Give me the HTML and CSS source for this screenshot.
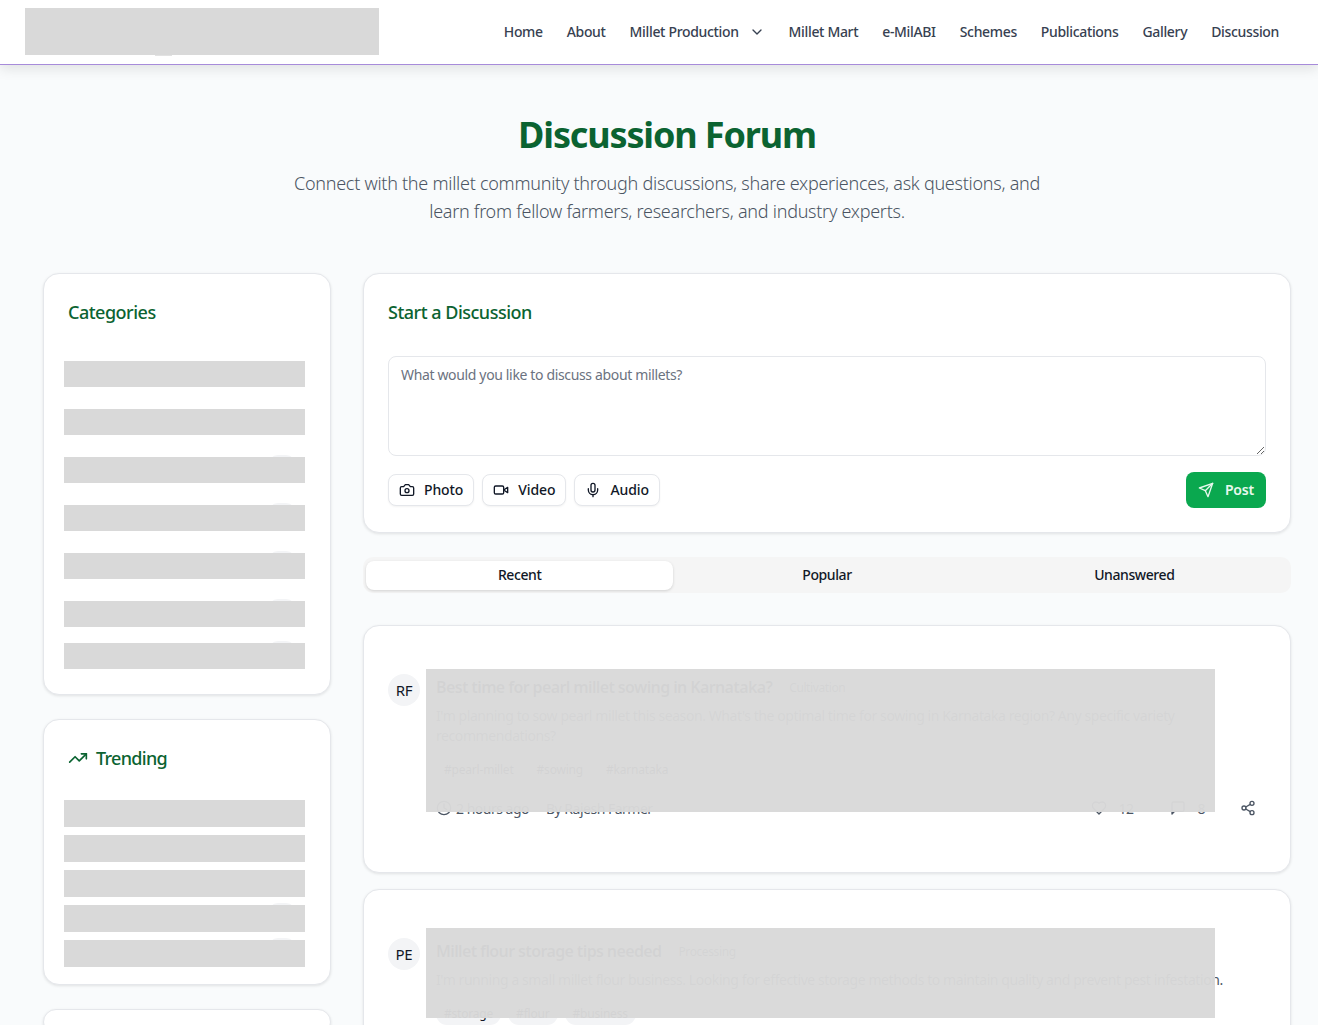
FILE: index.html
```html
<!DOCTYPE html>
<html lang="en">

<head>
    <meta charset="UTF-8">
    <meta name="viewport" content="width=device-width, initial-scale=1.0">
    <title>Discussion Forum</title>
    <link rel="stylesheet" href="styles.css">
</head>

<body>
    <header class="site-header">
        <div class="logo"></div>
        <nav class="nav">
            <a href="#">Home</a>
            <a href="#">About</a>
            <a href="#" class="nav-drop">Millet Production
                <svg class="icon-sm" viewBox="0 0 24 24"><path d="m6 9 6 6 6-6"/></svg>
            </a>
            <a href="#">Millet Mart</a>
            <a href="#">e-MilABI</a>
            <a href="#">Schemes</a>
            <a href="#">Publications</a>
            <a href="#">Gallery</a>
            <a href="#">Discussion</a>
        </nav>
    </header>

    <main class="page">
        <section class="intro">
            <h1>Discussion Forum</h1>
            <p>Connect with the millet community through discussions, share experiences, ask questions, and<br>learn from fellow farmers, researchers, and industry experts.</p>
        </section>

        <div class="layout">
            <aside class="sidebar">
                <div class="card side-card categories">
                    <h2>Categories</h2>
                    <div class="blocked"></div>
                    <div class="blocked"></div>
                    <div class="blocked has-count"></div>
                    <div class="blocked has-count"></div>
                    <div class="blocked has-count"></div>
                    <div class="blocked has-count tight"></div>
                    <div class="blocked has-count"></div>
                </div>

                <div class="card side-card trending">
                    <h2>
                        <svg class="icon" viewBox="0 0 24 24"><path d="M22 7 13.5 15.5 8.5 10.5 2 17"/><path d="M16 7h6v6"/></svg>
                        Trending
                    </h2>
                    <div class="blocked"></div>
                    <div class="blocked"></div>
                    <div class="blocked"></div>
                    <div class="blocked has-count"></div>
                    <div class="blocked has-count"></div>
                </div>

                <div class="card side-card"></div>
            </aside>

            <div class="content">
                <section class="card composer">
                    <h2>Start a Discussion</h2>
                    <textarea placeholder="What would you like to discuss about millets?"></textarea>
                    <div class="composer-actions">
                        <button type="button" class="btn">
                            <svg class="icon-sm" viewBox="0 0 24 24"><path d="M14.5 4h-5L7 7H4a2 2 0 0 0-2 2v9a2 2 0 0 0 2 2h16a2 2 0 0 0 2-2V9a2 2 0 0 0-2-2h-3l-2.5-3z"/><circle cx="12" cy="13" r="3"/></svg>
                            Photo
                        </button>
                        <button type="button" class="btn">
                            <svg class="icon-sm" viewBox="0 0 24 24"><path d="m22 8-6 4 6 4V8Z"/><rect x="2" y="6" width="14" height="12" rx="2"/></svg>
                            Video
                        </button>
                        <button type="button" class="btn">
                            <svg class="icon-sm" viewBox="0 0 24 24"><path d="M12 2a3 3 0 0 0-3 3v7a3 3 0 0 0 6 0V5a3 3 0 0 0-3-3Z"/><path d="M19 10v2a7 7 0 0 1-14 0v-2"/><path d="M12 19v3"/></svg>
                            Audio
                        </button>
                        <button type="button" class="btn-post">
                            <svg class="icon" viewBox="0 0 24 24"><path d="m22 2-7 20-4-9-9-4Z"/><path d="M22 2 11 13"/></svg>
                            Post
                        </button>
                    </div>
                </section>

                <div class="tabs">
                    <button type="button" class="tab active">Recent</button>
                    <button type="button" class="tab">Popular</button>
                    <button type="button" class="tab">Unanswered</button>
                </div>

                <article class="card post">
                    <div class="avatar">RF</div>
                    <div class="post-body">
                        <div class="post-title">
                            <h3>Best time for pearl millet sowing in Karnataka?</h3>
                            <span class="cat">Cultivation</span>
                        </div>
                        <p class="post-text">I'm planning to sow pearl millet this season. What's the optimal time for sowing in Karnataka region? Any specific variety recommendations?</p>
                        <div class="tags">
                            <span>#pearl-millet</span>
                            <span>#sowing</span>
                            <span>#karnataka</span>
                        </div>
                        <div class="post-meta">
                            <svg class="icon-sm" viewBox="0 0 24 24"><circle cx="12" cy="12" r="10"/><path d="M12 6v6l4 2"/></svg>
                            <span>2 hours ago</span>
                            <span class="author">By Rajesh Farmer</span>
                            <span class="stat first">
                                <svg class="icon-sm" viewBox="0 0 24 24"><path d="M19 14c1.49-1.46 3-3.21 3-5.5A5.5 5.5 0 0 0 16.5 3c-1.76 0-3 .5-4.5 2-1.5-1.5-2.74-2-4.5-2A5.5 5.5 0 0 0 2 8.5c0 2.3 1.5 4.05 3 5.5l7 7Z"/></svg>
                                12
                            </span>
                            <span class="stat">
                                <svg class="icon-sm" viewBox="0 0 24 24"><path d="M21 15a2 2 0 0 1-2 2H7l-4 4V5a2 2 0 0 1 2-2h14a2 2 0 0 1 2 2z"/></svg>
                                8
                            </span>
                            <svg class="icon-sm share" viewBox="0 0 24 24"><circle cx="18" cy="5" r="3"/><circle cx="6" cy="12" r="3"/><circle cx="18" cy="19" r="3"/><path d="m8.59 13.51 6.83 3.98"/><path d="m15.41 6.51-6.82 3.98"/></svg>
                        </div>
                    </div>
                    <div class="veil veil-one"></div>
                </article>

                <article class="card post second">
                    <div class="avatar">PE</div>
                    <div class="post-body">
                        <div class="post-title">
                            <h3>Millet flour storage tips needed</h3>
                            <span class="cat">Processing</span>
                        </div>
                        <p class="post-text">I'm running a small millet flour business. Looking for effective storage methods to maintain quality and prevent pest infestation.</p>
                        <div class="tags">
                            <span>#storage</span>
                            <span>#flour</span>
                            <span>#business</span>
                        </div>
                    </div>
                    <div class="veil veil-two"></div>
                </article>
            </div>
        </div>
    </main>
</body>

</html>
```

FILE: styles.css
```css
* {
    box-sizing: border-box;
}

html,
body {
    margin: 0;
    height: 1025px;
    overflow: hidden;
}

body {
    font-family: "Noto Sans", "Open Sans", Arial, sans-serif;
    background-color: #f9fbfc;
    color: #111827;
}

svg {
    fill: none;
    stroke: currentColor;
    stroke-width: 2;
    stroke-linecap: round;
    stroke-linejoin: round;
    flex-shrink: 0;
}

.icon {
    width: 20px;
    height: 20px;
}

.icon-sm {
    width: 16px;
    height: 16px;
}

/* Header */
.site-header {
    position: relative;
    display: flex;
    align-items: flex-start;
    justify-content: space-between;
    height: 65px;
    padding: 8px 39px 0 25px;
    background-color: #fff;
    border-bottom: 1px solid #a78bda;
    box-shadow: 0 4px 12px rgba(0, 0, 0, 0.1);
}

.logo {
    position: relative;
    width: 354px;
    height: 47px;
    background-color: #d9d9d9;
}

.logo::after {
    content: "";
    position: absolute;
    left: 130px;
    bottom: -1px;
    width: 17px;
    height: 1px;
    background-color: #e2e2e2;
}

.nav {
    display: flex;
    gap: 24px;
    height: 47px;
    align-items: center;
}

.nav a {
    display: flex;
    align-items: center;
    gap: 8px;
    color: #374151;
    font-size: 14px;
    font-weight: 500;
    letter-spacing: -0.34px;
    text-decoration: none;
}

.nav-drop svg {
    margin-left: 2px;
}

/* Page */
.page {
    padding: 0 27px 0 43px;
}

.intro {
    padding-top: 48px;
    text-align: center;
}

.intro h1 {
    margin: 0;
    color: #0b6331;
    font-size: 36px;
    line-height: 44px;
    font-weight: 700;
    letter-spacing: -1.15px;
}

.intro p {
    margin: 12px 0 0;
    color: #4b5563;
    font-size: 18px;
    line-height: 28px;
    font-weight: 300;
    letter-spacing: -0.27px;
}

.layout {
    display: grid;
    grid-template-columns: 288px 928px;
    gap: 32px;
    margin-top: 48px;
}

.card {
    background-color: #fff;
    border: 1px solid #e5e7eb;
    border-radius: 16px;
    box-shadow: 0 1px 3px rgba(0, 0, 0, 0.1);
}

h2 {
    display: flex;
    align-items: center;
    gap: 8px;
    margin: 0;
    color: #0b6331;
    font-size: 18px;
    line-height: 28px;
    font-weight: 500;
    letter-spacing: -0.5px;
}

/* Sidebar */
.sidebar {
    display: flex;
    flex-direction: column;
    gap: 24px;
}

.side-card {
    padding: 24px 25px 0 20px;
    isolation: isolate;
}

.side-card h2 {
    padding-left: 4px;
}

.categories {
    height: 422px;
}

.categories h2 {
    margin-bottom: 35px;
}

.categories .blocked {
    height: 26px;
    margin-bottom: 22px;
}

.categories .blocked.tight {
    margin-bottom: 16px;
}

.trending {
    height: 266px;
}

.trending h2 {
    margin-bottom: 28px;
    letter-spacing: -0.7px;
}

.trending .blocked {
    margin-bottom: 8px;
}

.blocked {
    position: relative;
    height: 27px;
    background-color: #d9d9d9;
}

/* Count badge that sticks out above a grey row */
.has-count::before {
    content: "";
    position: absolute;
    top: -2px;
    right: 9px;
    width: 28px;
    height: 20px;
    border-radius: 10px;
    background-color: #f3f4f6;
    z-index: -1;
}

/* Composer */
.composer {
    height: 260px;
    padding: 24px;
}

.composer h2 {
    margin-bottom: 30px;
}

textarea {
    display: block;
    width: 100%;
    height: 100px;
    padding: 8px 12px;
    font-family: inherit;
    font-size: 14px;
    line-height: 20px;
    letter-spacing: -0.35px;
    border: 1px solid #e5e7eb;
    border-radius: 8px;
    background-color: #fff;
}

textarea::placeholder {
    color: #6b7280;
}

.composer-actions {
    display: flex;
    align-items: center;
    gap: 8px;
    margin-top: 16px;
}

.btn {
    display: flex;
    align-items: center;
    gap: 9px;
    height: 32px;
    padding: 0 10px 2px;
    font-family: inherit;
    font-size: 14px;
    font-weight: 500;
    letter-spacing: -0.1px;
    color: #111827;
    background-color: #fff;
    border: 1px solid #e5e7eb;
    border-radius: 8px;
    box-shadow: 0 1px 2px rgba(0, 0, 0, 0.05);
}

.btn svg {
    margin-top: 2px;
}

.btn-post {
    display: flex;
    align-items: center;
    gap: 11px;
    height: 36px;
    margin-left: auto;
    padding: 0 12px 2px;
    font-family: inherit;
    font-size: 14px;
    font-weight: 600;
    letter-spacing: -0.2px;
    color: #e8f8ee;
    background-color: #0aa84f;
    border: none;
    border-radius: 8px;
}

.btn-post .icon {
    width: 16px;
    height: 16px;
    margin-top: 2px;
}

/* Tabs */
.tabs {
    display: grid;
    grid-template-columns: repeat(3, 1fr);
    height: 36px;
    margin: 24px 0 32px;
    padding: 4px 3px 3px;
    background-color: #f5f5f5;
    border-radius: 10px;
}

.tab {
    padding: 0 0 2px;
    font-family: inherit;
    font-size: 14px;
    font-weight: 500;
    letter-spacing: -0.4px;
    color: #111827;
    background: none;
    border: none;
    border-radius: 8px;
}

.tab.active {
    background-color: #fff;
    box-shadow: 0 1px 3px rgba(0, 0, 0, 0.15);
}

/* Posts */
.post {
    position: relative;
    display: flex;
    gap: 16px;
    height: 248px;
    padding: 48px 24px 0;
    margin-bottom: 16px;
}

.post.second {
    height: 200px;
    padding-top: 48px;
}

.avatar {
    display: flex;
    align-items: center;
    justify-content: center;
    width: 32px;
    height: 32px;
    border-radius: 50%;
    background-color: #f3f4f6;
    font-size: 15px;
    letter-spacing: -0.3px;
    flex-shrink: 0;
}

.post-body {
    flex: 1;
    min-width: 0;
}

.post-title {
    display: flex;
    align-items: center;
    gap: 17px;
    height: 26px;
    color: #111827;
}

.post-title h3 {
    margin: 0;
    font-size: 16px;
    font-weight: 600;
    letter-spacing: -0.62px;
}

.cat {
    font-size: 12px;
    letter-spacing: -0.4px;
    color: #374151;
}

.post-text {
    margin: 6px 0 0;
    color: #4b5563;
    font-size: 14px;
    line-height: 20px;
    letter-spacing: -0.42px;
}

.tags {
    display: flex;
    gap: 7px;
    margin-top: 13px;
}

.tags span {
    padding: 2px 8px;
    height: 22px;
    border-radius: 11px;
    background-color: #f3f4f6;
    color: #111827;
    font-size: 12px;
    line-height: 18px;
    letter-spacing: -0.2px;
}

.post-meta {
    display: flex;
    align-items: center;
    gap: 4px;
    height: 20px;
    margin-top: 17px;
    color: #4b5563;
    font-size: 14px;
    letter-spacing: -0.5px;
}

.author {
    margin-left: 13px;
}

.stat {
    display: flex;
    align-items: center;
    gap: 11px;
    margin-left: 33px;
}

.stat.first {
    margin-left: auto;
}

.share {
    margin-left: 31px;
    margin-right: 10px;
}

/* Grey boxes that cover the text of a post */
.veil {
    position: absolute;
    left: 62px;
    width: 789px;
    background-color: rgba(217, 217, 217, 0.97);
}

.veil-one {
    top: 43px;
    height: 143px;
}

.veil-two {
    top: 38px;
    height: 90px;
}
```
